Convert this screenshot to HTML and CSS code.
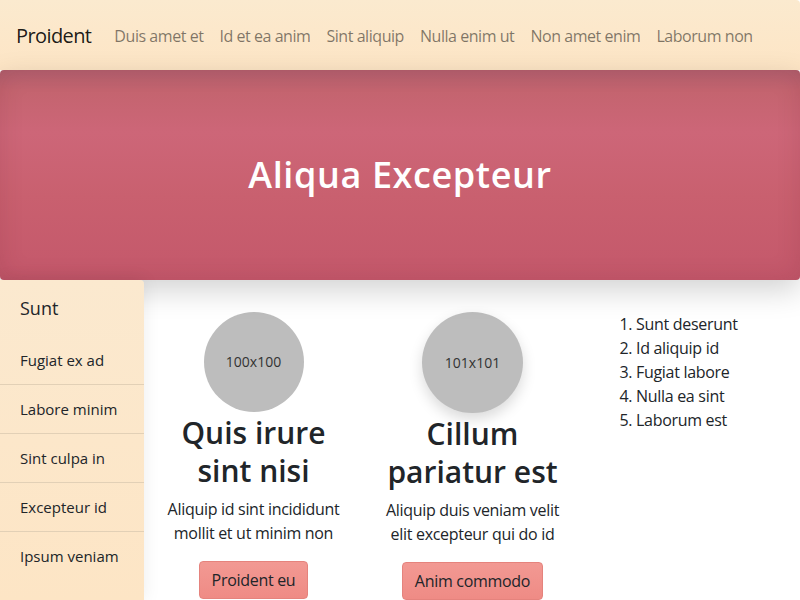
FILE: index.html
```html
<!DOCTYPE html>
<html lang="la">
<head>
<meta charset="utf-8">
<title>Proident</title>
<link rel="stylesheet" href="styles.css">
</head>
<body>
<nav class="navbar">
  <a class="brand" href="#">Proident</a>
  <a class="nav-link" href="#">Duis amet et</a>
  <a class="nav-link" href="#">Id et ea anim</a>
  <a class="nav-link" href="#">Sint aliquip</a>
  <a class="nav-link" href="#">Nulla enim ut</a>
  <a class="nav-link" href="#">Non amet enim</a>
  <a class="nav-link" href="#">Laborum non</a>
</nav>
<header class="hero">
  <h1 class="hero-title">Aliqua Excepteur</h1>
</header>
<div class="layout">
  <aside class="sidebar">
    <div class="side-head">Sunt</div>
    <a class="side-item" href="#">Fugiat ex ad</a>
    <a class="side-item" href="#">Labore minim</a>
    <a class="side-item" href="#">Sint culpa in</a>
    <a class="side-item" href="#">Excepteur id</a>
    <a class="side-item last" href="#">Ipsum veniam</a>
  </aside>
  <main class="main">
    <section class="card">
      <div class="avatar">100x100</div>
      <h2 class="card-title">Quis irure sint nisi</h2>
      <p class="card-text">Aliquip id sint incididunt mollit et ut minim non</p>
      <a class="btn" href="#">Proident eu</a>
    </section>
    <section class="card">
      <div class="avatar big shadow">101x101</div>
      <h2 class="card-title">Cillum pariatur est</h2>
      <p class="card-text">Aliquip duis veniam velit elit excepteur qui do id</p>
      <a class="btn" href="#">Anim commodo</a>
    </section>
    <section class="list-col">
      <ol class="list">
        <li>Sunt deserunt</li>
        <li>Id aliquip id</li>
        <li>Fugiat labore</li>
        <li>Nulla ea sint</li>
        <li>Laborum est</li>
      </ol>
    </section>
  </main>
</div>
</body>
</html>
```

FILE: styles.css
```css
* { box-sizing: border-box; }
html, body { margin: 0; padding: 0; }
body {
  font-family: "Open Sans", "Noto Sans", sans-serif;
  font-size: 16px;
  line-height: 24px;
  letter-spacing: -0.3px;
  color: #212529;
  background: #fff;
  height: 600px;
  overflow: hidden;
}
a { text-decoration: none; color: inherit; }

.navbar {
  height: 70px;
  display: flex;
  align-items: center;
  padding: 1px 16px 0;
  background: linear-gradient(180deg, #fbeacf 0%, #fde5c5 100%);
  border-radius: 0 4px 0 0;
  white-space: nowrap;
}
.brand {
  font-size: 20px;
  line-height: 30px;
  letter-spacing: -0.6px;
  color: rgba(0,0,0,0.9);
  margin-right: 15px;
}
.nav-link {
  padding: 8px;
  font-size: 16px;
  letter-spacing: -0.45px;
  color: rgba(0,0,0,0.5);
}

.hero {
  height: 210px;
  display: flex;
  align-items: center;
  justify-content: center;
  border-radius: 4px;
  background: linear-gradient(180deg, #b3606e 0%, #c4646f 10%, #cd6678 30%, #c9606f 60%, #c4586b 100%);
  box-shadow: inset 0 0 24px rgba(80,20,30,0.12), 0 10px 30px rgba(0,0,0,0.18);
  position: relative;
}
.hero-title {
  margin: 0;
  color: #fff;
  font-size: 36px;
  line-height: 44px;
  font-weight: 600;
  letter-spacing: 0.6px;
}

.layout {
  display: grid;
  grid-template-columns: 144px 1fr;
  height: 320px;
}
.sidebar {
  background: linear-gradient(180deg, #fbe9cf 0%, #fde5c5 100%);
  border-radius: 0 4px 0 0;
  box-shadow: 0 0 18px rgba(0,0,0,0.08);
  display: flex;
  flex-direction: column;
  position: relative;
  z-index: 1;
  letter-spacing: 0;
}
.side-head {
  padding: 16px 20px;
  font-size: 18px;
  line-height: 24px;
}
.side-item {
  padding: 12px 20px;
  font-size: 15px;
  line-height: 24px;
  border-bottom: 1px solid #e2d0b6;
}
.side-item.last { border-bottom: 0; }

.main {
  display: grid;
  grid-template-columns: 219px 219px 1fr;
  padding-top: 32px;
}
.card {
  padding: 0 12px;
  display: flex;
  flex-direction: column;
  align-items: center;
  text-align: center;
}
.avatar {
  width: 100px;
  height: 100px;
  border-radius: 50%;
  background: #bdbdbd;
  display: flex;
  align-items: center;
  justify-content: center;
  font-size: 14px;
  letter-spacing: 0;
  color: #333;
}
.avatar.big { width: 101px; height: 101px; }
.avatar.shadow { box-shadow: 0 6px 14px rgba(0,0,0,0.15); }
.card-title {
  margin: 2px 0 6px;
  font-size: 30px;
  line-height: 38.4px;
  font-weight: 600;
  letter-spacing: 0;
}
.card-text {
  margin: 0 0 16px;
}
.btn {
  display: inline-block;
  padding: 6px 12px;
  border: 1px solid #e5837d;
  border-radius: 4px;
  background: linear-gradient(180deg, #f29993 0%, #ef8b85 100%);
  color: #212529;
  line-height: 24px;
}
.list-col { padding: 0; }
.list {
  margin: 0;
  padding-left: 54px;
}
```
